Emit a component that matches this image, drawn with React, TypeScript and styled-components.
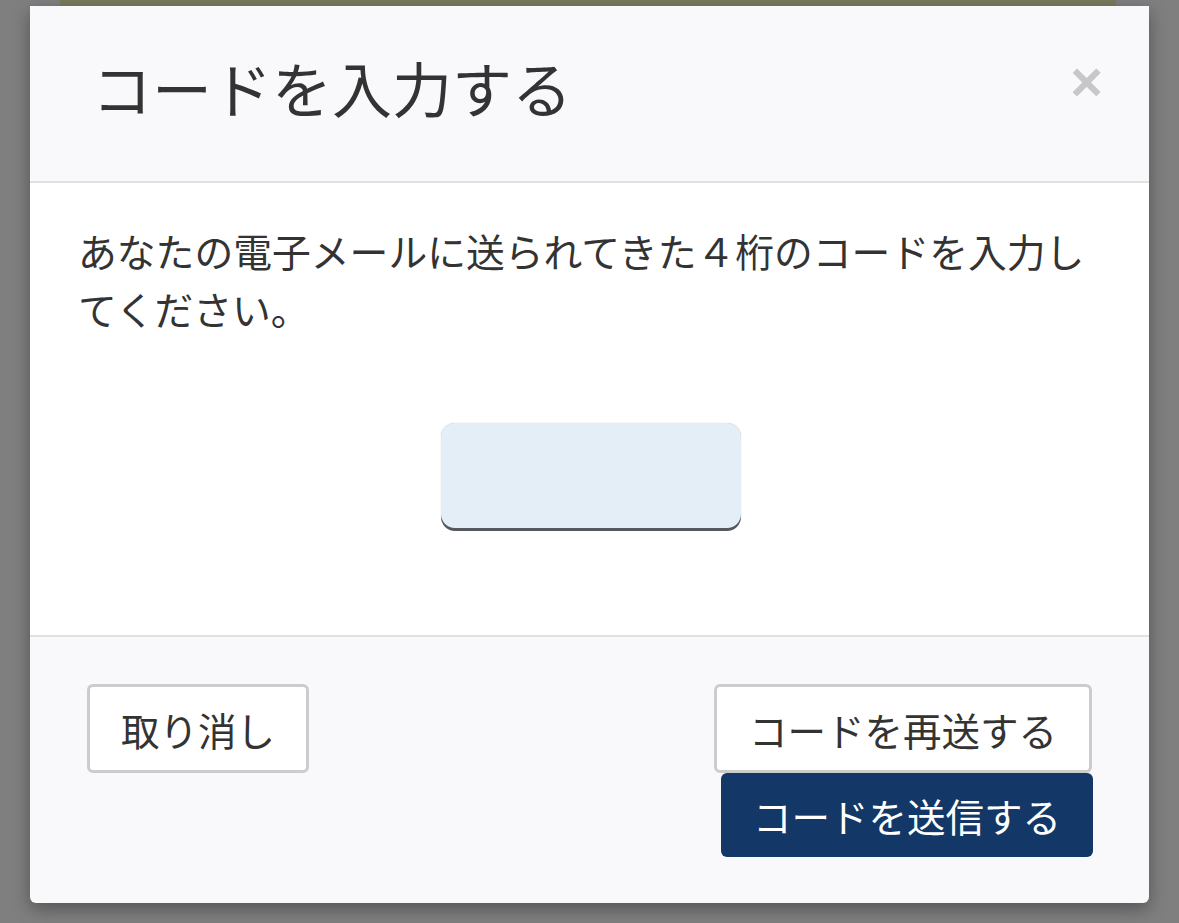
import React from 'react';
import styled, { createGlobalStyle } from 'styled-components';

const GlobalStyle = createGlobalStyle`
    html, body {
        margin: 0;
        padding: 0;
        background: #7f7f7f;
        font-family: "Noto Sans CJK JP", "Noto Sans", sans-serif;
        color: #333;
    }
`;

const Backdrop = styled.div`
    width: 1179px;
    height: 923px;
    overflow: hidden;
    background: #7f7f7f;
    display: flex;
    flex-direction: column;
    align-items: center;
`;

const PageStrip = styled.div`
    width: 1056px;
    height: 6px;
    flex-shrink: 0;
    background: #7a7a5e;
    margin-left: -3px;
`;

const Modal = styled.div`
    width: 1119px;
    background: #f9f9fb;
    border-radius: 0 0 6px 6px;
    box-shadow: 0 6px 18px rgba(0, 0, 0, 0.35);
    display: flex;
    flex-direction: column;
`;

const Header = styled.div`
    height: 177px;
    box-sizing: border-box;
    padding: 0 46px 0 62px;
    display: flex;
    align-items: center;
    justify-content: space-between;
    border-bottom: 2px solid #e1e1e3;
`;

const Title = styled.h4`
    margin: 0 0 14px;
    font-size: 60px;
    font-weight: 400;
    line-height: 1.1;
    color: #333;
`;

const Close = styled.button`
    border: 0;
    background: none;
    padding: 0;
    margin-bottom: 24px;
    font-family: "Liberation Sans", Arial, sans-serif;
    font-size: 56px;
    font-weight: 700;
    line-height: 1;
    color: #c7c7c9;
    cursor: pointer;
`;

const Body = styled.div`
    background: #fff;
    height: 454px;
    box-sizing: border-box;
    padding: 38px 46px 0 48px;
    display: flex;
    flex-direction: column;
    align-items: center;
    border-bottom: 2px solid #e1e1e3;
`;

const Message = styled.p`
    margin: 0;
    align-self: stretch;
    font-size: 38.8px;
    line-height: 58px;
    color: #333;
`;

const CodeInput = styled.input`
    margin-top: 86px;
    width: 300px;
    height: 105px;
    box-sizing: border-box;
    border: 0;
    border-radius: 14px;
    background: #e3eef7;
    box-shadow: 0 3px 0 #55595e, 0 0 1px rgba(0, 0, 0, 0.3);
    outline: none;
    font-size: 40px;
    text-align: center;
`;

const Footer = styled.div`
    padding: 47px 57px 46px;
    display: flex;
    justify-content: space-between;
    align-items: flex-start;
`;

const ButtonStack = styled.div`
    display: flex;
    flex-direction: column;
    align-items: flex-end;
`;

const Button = styled.button<{ $primary?: boolean; $width: number }>`
    width: ${(p) => p.$width}px;
    height: ${(p) => (p.$primary ? 84 : 89)}px;
    box-sizing: border-box;
    font-family: "Noto Sans CJK JP", "Noto Sans", sans-serif;
    font-size: 38.5px;
    font-weight: 400;
    padding: 0;
    border-radius: 6px;
    cursor: pointer;
    border: ${(p) => (p.$primary ? '0' : '3px solid #cccccc')};
    background: ${(p) => (p.$primary ? '#133766' : '#fff')};
    color: ${(p) => (p.$primary ? '#fff' : '#333')};
    margin-right: ${(p) => (p.$primary ? -1 : 0)}px;
`;

const App: React.FC = () => {
    return (
        <Backdrop>
            <GlobalStyle />
            <PageStrip />
            <Modal>
                <Header>
                    <Title>コードを入力する</Title>
                    <Close aria-label="閉じる">×</Close>
                </Header>
                <Body>
                    <Message>
                        あなたの電子メールに送られてきた４桁のコードを入力してください。
                    </Message>
                    <CodeInput type="text" inputMode="numeric" maxLength={4} />
                </Body>
                <Footer>
                    <Button $width={222}>取り消し</Button>
                    <ButtonStack>
                        <Button $width={378}>コードを再送する</Button>
                        <Button $primary $width={372}>
                            コードを送信する
                        </Button>
                    </ButtonStack>
                </Footer>
            </Modal>
        </Backdrop>
    );
};

export default App;
